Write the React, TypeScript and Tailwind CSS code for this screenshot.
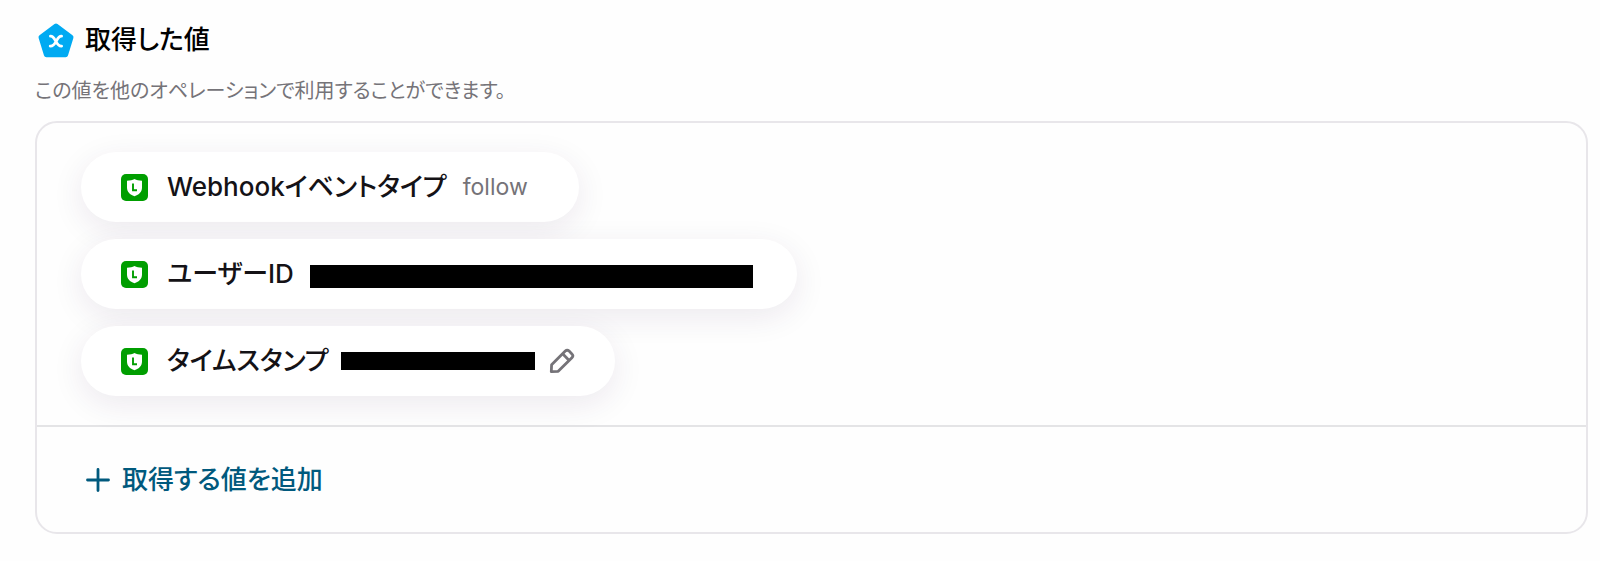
import type { ReactNode } from "react";

function AppLogo() {
  return (
    <svg viewBox="0 0 36 36" className="size-9 shrink-0" aria-hidden="true">
      <path
        d="M18 4 L33 15.2 L27.6 32.800 L8.4 32.800 L3 15.2 Z"
        fill="#00aaf2"
        stroke="#00aaf2"
        strokeWidth="5"
        strokeLinejoin="round"
      />
      <path
        d="M12.400 14.200 C17.600 13.600 17.600 24.800 23.600 24.200 M23.600 14.200 C18.400 13.600 18.400 24.800 12.200 24.200"
        fill="none"
        stroke="#fff"
        strokeWidth="2.800"
        strokeLinecap="round"
      />
    </svg>
  );
}

function ShieldIcon() {
  return (
    <svg viewBox="0 0 27 27" className="size-[27px] shrink-0" aria-hidden="true">
      <rect width="27" height="27" rx="5" fill="#009e00" />
      <path
        d="M6 6.800 C9 6.600 11.5 6 13.5 5 C15.500 6 18 6.600 21 6.800 V13.500 C21 17.800 18.300 20.600 13.500 22.300 C8.700 20.600 6 17.800 6 13.500 Z"
        fill="#fff"
      />
      <path d="M12 9.500 V16.200 H16" fill="none" stroke="#009e00" strokeWidth="1.9" />
    </svg>
  );
}

function PencilIcon() {
  return (
    <svg
      viewBox="0 0 26 26"
      className="size-[26px]"
      fill="none"
      stroke="#757378"
      strokeWidth="2.8"
      strokeLinejoin="round"
      aria-hidden="true"
    >
      <path d="M2.300 23.700 L2.600 16.800 L16.300 3.100 Q18.200 1.200 20.100 3.100 L22.900 5.900 Q24.800 7.800 22.900 9.700 L9.200 23.300 Z" />
      <path d="M13.600 5.800 L20.200 12.400" />
    </svg>
  );
}

function Pill({ label, className, children }: { label: string; className: string; children: ReactNode }) {
  return (
    <li
      className={`flex h-[70px] items-center rounded-full bg-white pl-10 shadow-[0_8px_32px_rgba(60,20,80,0.09)] ${className}`}
    >
      <ShieldIcon />
      <span className="ml-[19px] text-[26px] leading-8 font-medium">{label}</span>
      {children}
    </li>
  );
}

export default function App() {
  return (
    <main className="bg-[#fefefe] pt-[22px] pr-3 pb-7 pl-[35px] font-[Inter,'Noto_Sans_CJK_JP',sans-serif] text-[#141216] [font-feature-settings:'palt']">
      <header>
        <div className="flex items-center gap-[11px] pl-[3px]">
          <AppLogo />
          <h2 className="text-[26px] leading-9 font-medium text-black">取得した値</h2>
        </div>
        <p className="mt-[17px] text-[20px] leading-8 text-[#757378]">
          この値を他のオペレーションで利用することができます。
        </p>
      </header>

      <section className="mt-3.5 rounded-[22px] border-2 border-[#e8e6ea]">
        <ul className="flex flex-col items-start gap-[17px] px-11 py-[29px]">
          <Pill label="Webhookイベントタイプ" className="pr-[51px]">
            <span className="ml-4 text-[23px] leading-8 text-[#757378]">follow</span>
          </Pill>
          <Pill label="ユーザーID" className="pr-11">
            <span className="ml-4 pt-1">
              <span className="block h-[23px] w-[443px] bg-black" />
            </span>
          </Pill>
          <Pill label="タイムスタンプ" className="pr-10">
            <span className="ml-3 h-[18px] w-[194px] bg-black" />
            <button type="button" aria-label="編集" className="ml-3.5 cursor-pointer">
              <PencilIcon />
            </button>
          </Pill>
        </ul>
        <div className="border-t-2 border-[#e4e4e6] px-[49px] py-8">
          <button type="button" className="flex h-[41px] cursor-pointer items-center gap-3 text-[#00597d]">
            <svg
              viewBox="0 0 24 24"
              className="size-6"
              fill="none"
              stroke="currentColor"
              strokeWidth="2.8"
              strokeLinecap="round"
              aria-hidden="true"
            >
              <path d="M12 1.500 V22.500 M1.500 12 H22.500" />
            </svg>
            <span className="text-[26px] leading-9 font-medium">取得する値を追加</span>
          </button>
        </div>
      </section>
    </main>
  );
}
